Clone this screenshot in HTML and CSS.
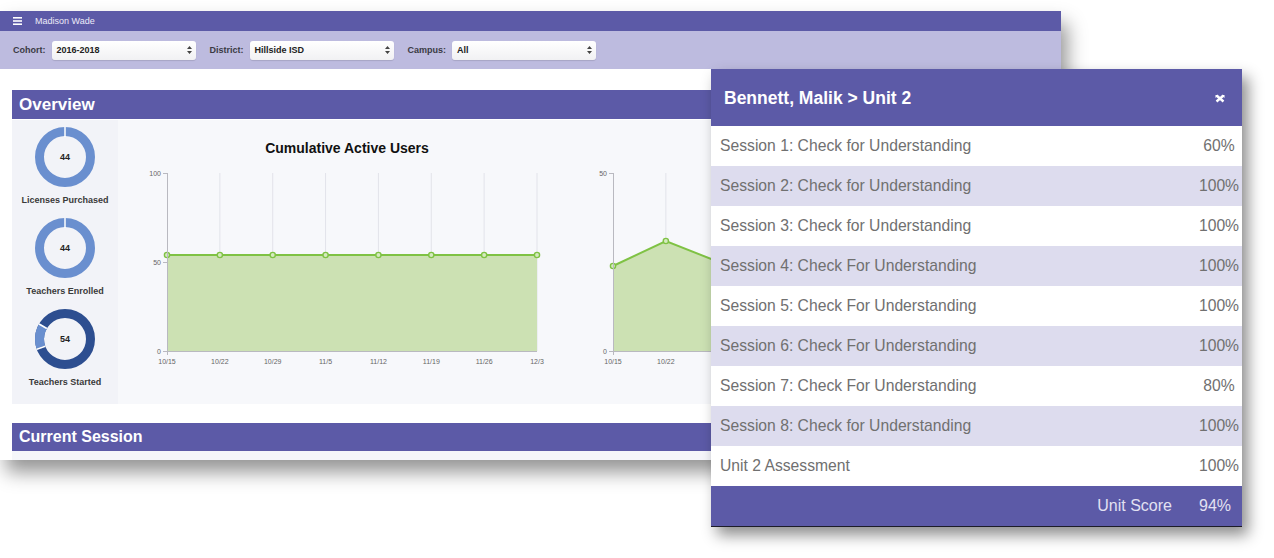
FILE: index.html
```html
<!DOCTYPE html>
<html lang="en">
<head>
<meta charset="utf-8">
<title>Madison Wade – Overview</title>
<link rel="stylesheet" href="styles.css">
</head>
<body>
<div class="stage">
  <div class="app">
    <header class="topbar">
      <svg class="hamburger" width="9" height="8" viewBox="0 0 9 8"><rect x="0" y="0" width="9" height="1.6" fill="#fff"/><rect x="0" y="3.2" width="9" height="1.6" fill="#fff"/><rect x="0" y="6.4" width="9" height="1.6" fill="#fff"/></svg>
      <span class="user">Madison Wade</span>
    </header>
    <div class="filters">
      <div class="filter"><span class="flabel">Cohort:</span><div class="select">2016-2018<svg class="arrows" width="5" height="8" viewBox="0 0 5 8"><path d="M2.5 0 L5 3 H0Z M2.5 8 L5 5 H0Z" fill="#444"/></svg></div></div>
      <div class="filter"><span class="flabel">District:</span><div class="select">Hillside ISD<svg class="arrows" width="5" height="8" viewBox="0 0 5 8"><path d="M2.5 0 L5 3 H0Z M2.5 8 L5 5 H0Z" fill="#444"/></svg></div></div>
      <div class="filter"><span class="flabel">Campus:</span><div class="select">All<svg class="arrows" width="5" height="8" viewBox="0 0 5 8"><path d="M2.5 0 L5 3 H0Z M2.5 8 L5 5 H0Z" fill="#444"/></svg></div></div>
    </div>
    <main class="content">
      <section class="section">
        <h2 class="section-title">Overview</h2>
        <div class="overview">
          <div class="stats">
            <div class="stat">
              <div class="donut">
                <svg width="60" height="60" viewBox="0 0 60 60"><circle cx="30" cy="30" r="25.5" fill="none" stroke="#6a8fcf" stroke-width="9"/><line x1="30" y1="0" x2="30" y2="10" stroke="#fff" stroke-width="1.5"/></svg>
                <span class="donut-num">44</span>
              </div>
              <div class="stat-label">Licenses Purchased</div>
            </div>
            <div class="stat">
              <div class="donut">
                <svg width="60" height="60" viewBox="0 0 60 60"><circle cx="30" cy="30" r="25.5" fill="none" stroke="#6a8fcf" stroke-width="9"/><line x1="30" y1="0" x2="30" y2="10" stroke="#fff" stroke-width="1.5"/></svg>
                <span class="donut-num">44</span>
              </div>
              <div class="stat-label">Teachers Enrolled</div>
            </div>
            <div class="stat">
              <div class="donut">
                <svg width="60" height="60" viewBox="0 0 60 60"><circle cx="30" cy="30" r="25.5" fill="none" stroke="#2d4e90" stroke-width="9"/><circle cx="30" cy="30" r="25.5" fill="none" stroke="#6a8fcf" stroke-width="9" stroke-dasharray="22.25 137.97" stroke-dashoffset="-111.26" transform="rotate(-90 30 30)"/><line x1="10.27" y1="37.18" x2="1.81" y2="40.26" stroke="#fff" stroke-width="1.5"/><line x1="11.81" y1="19.5" x2="4.02" y2="15" stroke="#fff" stroke-width="1.5"/></svg>
                <span class="donut-num">54</span>
              </div>
              <div class="stat-label">Teachers Started</div>
            </div>
          </div>
          <div class="charts">
            <div class="chart">
              <div class="chart-title">Cumulative Active Users</div>
              <svg class="chart-svg" width="420" height="215" viewBox="0 0 420 215">
                <g stroke="#e2e3ea" stroke-width="1">
                  <line x1="82.86" y1="13" x2="82.86" y2="191"/><line x1="135.71" y1="13" x2="135.71" y2="191"/><line x1="188.57" y1="13" x2="188.57" y2="191"/><line x1="241.43" y1="13" x2="241.43" y2="191"/><line x1="294.29" y1="13" x2="294.29" y2="191"/><line x1="347.14" y1="13" x2="347.14" y2="191"/><line x1="400" y1="13" x2="400" y2="191"/>
                </g>
                <polygon points="30,95 400,95 400,191 30,191" fill="#cce1b3"/>
                <polyline points="30,95 400,95" fill="none" stroke="#7fc244" stroke-width="2"/>
                <g fill="#d6eac0" stroke="#7fc244" stroke-width="1.4">
                  <circle cx="30" cy="95" r="2.6"/><circle cx="82.86" cy="95" r="2.6"/><circle cx="135.71" cy="95" r="2.6"/><circle cx="188.57" cy="95" r="2.6"/><circle cx="241.43" cy="95" r="2.6"/><circle cx="294.29" cy="95" r="2.6"/><circle cx="347.14" cy="95" r="2.6"/><circle cx="400" cy="95" r="2.6"/>
                </g>
                <g stroke="#b9b9c0" stroke-width="1">
                  <line x1="30.5" y1="13" x2="30.5" y2="195"/><line x1="26" y1="191.5" x2="400" y2="191.5"/>
                  <line x1="26" y1="13.5" x2="30" y2="13.5"/><line x1="26" y1="102.5" x2="30" y2="102.5"/>
                </g>
                <g class="axis-text" text-anchor="end">
                  <text x="24" y="16">100</text><text x="24" y="105">50</text><text x="24" y="194">0</text>
                </g>
                <g class="axis-text" text-anchor="middle">
                  <text x="30" y="204">10/15</text><text x="82.86" y="204">10/22</text><text x="135.71" y="204">10/29</text><text x="188.57" y="204">11/5</text><text x="241.43" y="204">11/12</text><text x="294.29" y="204">11/19</text><text x="347.14" y="204">11/26</text><text x="400" y="204">12/3</text>
                </g>
              </svg>
            </div>
            <div class="chart">
              <div class="chart-title"></div>
              <svg class="chart-svg" width="420" height="215" viewBox="0 0 420 215">
                <g stroke="#e2e3ea" stroke-width="1">
                  <line x1="82.86" y1="13" x2="82.86" y2="191"/><line x1="135.71" y1="13" x2="135.71" y2="191"/>
                </g>
                <polygon points="30,106 82.86,81 135.71,102 188.57,96 241.43,110 294.29,104 347.14,112 400,108 400,191 30,191" fill="#cce1b3"/>
                <polyline points="30,106 82.86,81 135.71,102 188.57,96 241.43,110 294.29,104 347.14,112 400,108" fill="none" stroke="#7fc244" stroke-width="2"/>
                <g fill="#d6eac0" stroke="#7fc244" stroke-width="1.4">
                  <circle cx="30" cy="106" r="2.6"/><circle cx="82.86" cy="81" r="2.6"/>
                </g>
                <g stroke="#b9b9c0" stroke-width="1">
                  <line x1="30.5" y1="13" x2="30.5" y2="195"/><line x1="26" y1="191.5" x2="400" y2="191.5"/>
                  <line x1="26" y1="13.5" x2="30" y2="13.5"/>
                </g>
                <g class="axis-text" text-anchor="end">
                  <text x="24" y="16">50</text><text x="24" y="194">0</text>
                </g>
                <g class="axis-text" text-anchor="middle">
                  <text x="30" y="204">10/15</text><text x="82.86" y="204">10/22</text>
                </g>
              </svg>
            </div>
          </div>
        </div>
      </section>
      <section class="section section-current">
        <h2 class="section-title small">Current Session</h2>
        <div class="strip"></div>
      </section>
    </main>
  </div>

  <div class="modal">
    <div class="modal-header">
      <span class="modal-title">Bennett, Malik &gt; Unit 2</span>
      <svg class="close" width="10" height="9" viewBox="0 0 10 9"><path d="M1.5 1.5 L8.5 7.5 M8.5 1.5 L1.5 7.5" stroke="#fff" stroke-width="2.4" stroke-linecap="butt"/><path d="M0.5 1 L3.5 1 L0.5 4Z M9.5 1 L6.5 1 L9.5 4Z" fill="#fff"/></svg>
    </div>
    <div class="row"><span class="rlabel">Session 1: Check for Understanding</span><span class="pct">60%</span></div>
    <div class="row alt"><span class="rlabel">Session 2: Check for Understanding</span><span class="pct">100%</span></div>
    <div class="row"><span class="rlabel">Session 3: Check for Understanding</span><span class="pct">100%</span></div>
    <div class="row alt"><span class="rlabel">Session 4: Check For Understanding</span><span class="pct">100%</span></div>
    <div class="row"><span class="rlabel">Session 5: Check For Understanding</span><span class="pct">100%</span></div>
    <div class="row alt"><span class="rlabel">Session 6: Check For Understanding</span><span class="pct">100%</span></div>
    <div class="row"><span class="rlabel">Session 7: Check For Understanding</span><span class="pct">80%</span></div>
    <div class="row alt"><span class="rlabel">Session 8: Check for Understanding</span><span class="pct">100%</span></div>
    <div class="row"><span class="rlabel">Unit 2 Assessment</span><span class="pct">100%</span></div>
    <div class="modal-footer"><span class="score-label">Unit Score</span><span class="pct score">94%</span></div>
  </div>
</div>
</body>
</html>
```

FILE: styles.css
```css
* { box-sizing: border-box; }
html, body { margin: 0; padding: 0; background: #ffffff; }
body { font-family: "Liberation Sans", Arial, sans-serif; width: 1274px; height: 558px; overflow: hidden; }

.stage { position: relative; padding-top: 11px; height: 558px; }

.app {
  width: 1061px;
  background: #ffffff;
  box-shadow: 6px 12px 18px rgba(0, 0, 0, 0.42);
}

.topbar {
  height: 20px;
  background: #5c5aa7;
  display: flex;
  align-items: center;
  padding-left: 13px;
}
.hamburger { display: block; }
.user { margin-left: 13px; font-size: 9px; color: #eceaf7; }

.filters {
  height: 38px;
  background: #bdbbdf;
  display: flex;
  align-items: center;
  padding-left: 13px;
  gap: 14px;
}
.filter { display: flex; align-items: center; gap: 6px; }
.flabel { font-size: 9px; font-weight: bold; color: #3a3a44; }
.select {
  width: 144px;
  height: 19px;
  border-radius: 3px;
  background: linear-gradient(#ffffff, #f1f1f3);
  box-shadow: 0 1px 1px rgba(0,0,0,0.12);
  display: flex;
  align-items: center;
  justify-content: space-between;
  padding: 0 4px 0 5px;
  font-size: 9px;
  font-weight: bold;
  color: #222;
}
.arrows { display: block; }

.content { padding: 21px 12px 0 12px; }
.section-title {
  margin: 0;
  height: 29px;
  line-height: 29px;
  background: #5c5aa7;
  color: #ffffff;
  font-size: 17px;
  font-weight: bold;
  padding-left: 7px;
}
.section-title.small { height: 28px; line-height: 28px; font-size: 16px; }

.overview {
  margin-top: 1px;
  height: 284px;
  display: flex;
  background: #f7f8fb;
}
.stats {
  width: 106px;
  background: #f2f3f8;
  padding-top: 7px;
  display: flex;
  flex-direction: column;
  align-items: center;
}
.stat { display: flex; flex-direction: column; align-items: center; margin-bottom: 12px; }
.donut { display: grid; width: 60px; height: 60px; }
.donut svg, .donut-num { grid-area: 1 / 1; }
.donut svg { display: block; }
.donut-num { align-self: center; justify-self: center; font-size: 9px; font-weight: bold; color: #222; }
.stat-label { margin-top: 7px; line-height: 12px; font-size: 9px; font-weight: bold; color: #3a3a3a; white-space: nowrap; }

.charts { display: flex; gap: 26px; padding: 19px 0 0 19px; }
.chart { width: 420px; flex: none; }
.chart-title { text-align: center; font-size: 14px; font-weight: bold; line-height: 18px; min-height: 18px; color: #111; }
.chart-svg { display: block; margin-top: 3px; }
.axis-text { font-family: "Liberation Sans", Arial, sans-serif; font-size: 7px; fill: #666; }

.section-current { margin-top: 19px; }
.strip { height: 9px; background: #f5f6fa; }

.modal {
  position: absolute;
  left: 711px;
  top: 69px;
  width: 531px;
  background: #ffffff;
  border-bottom: 1px solid #1c1c28;
  box-shadow: 6px 8px 14px rgba(0, 0, 0, 0.45);
}
.modal-header {
  height: 57px;
  background: #5c5aa7;
  display: flex;
  align-items: center;
  justify-content: space-between;
  padding: 2px 17px 0 13px;
}
.modal-title { font-size: 17.5px; font-weight: bold; color: #ffffff; }
.close { display: block; }

.row {
  height: 40px;
  display: flex;
  align-items: center;
  padding-left: 9px;
  font-size: 15.7px;
  color: #707070;
  background: #ffffff;
}
.row.alt { background: #dddcee; }
.rlabel { flex: 1; }
.pct { width: 46px; text-align: center; }

.modal-footer {
  height: 40px;
  background: #5c5aa7;
  display: flex;
  align-items: center;
  justify-content: flex-end;
  font-size: 16px;
  color: #e2e1f2;
  padding-right: 4px;
}
.score-label { margin-right: 20px; }
```
